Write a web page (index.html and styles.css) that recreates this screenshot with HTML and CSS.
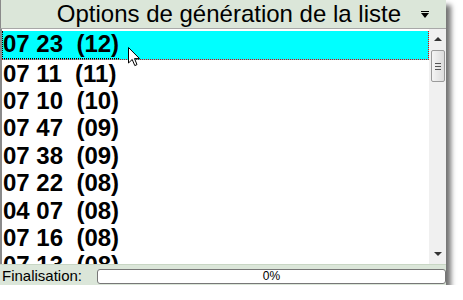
FILE: index.html
```html
<!DOCTYPE html>
<html lang="fr">
<head>
	<meta charset="UTF-8">
	<title>Liste</title>
	<link rel="stylesheet" href="styles.css">
</head>
<body>
<div class="win">
	<div class="head">
		<span class="head-title">Options de génération de la liste</span>
		<span class="head-arrow"></span>
	</div>
	<div class="body">
		<ul class="list">
			<li class="sel"><span class="focus">07 23  (12)</span></li>
			<li>07 11  (11)</li>
			<li>07 10  (10)</li>
			<li>07 47  (09)</li>
			<li>07 38  (09)</li>
			<li>07 22  (08)</li>
			<li>04 07  (08)</li>
			<li>07 16  (08)</li>
			<li>07 13  (08)</li>
		</ul>
		<div class="scroll">
			<span class="arr up"></span>
			<div class="track">
				<div class="thumb"><i></i><i></i><i></i></div>
			</div>
			<span class="arr down"></span>
		</div>
	</div>
	<div class="status">
		<span class="status-label">Finalisation:</span>
		<div class="progress">0%</div>
	</div>
	<svg class="cursor" width="13" height="21" viewBox="0 0 13 21">
		<path d="M0.5 0.5 L0.5 16 L4.2 12.5 L6.8 18.6 L9 17.6 L6.5 11.6 L11.5 11.6 Z" fill="#fff" stroke="#000" stroke-width="1"/>
	</svg>
</div>
</body>
</html>
```

FILE: styles.css
```css
body {
	margin: 0;
	background: #fff;
	font-family: "Liberation Sans", Arial, sans-serif;
}
.win {
	position: relative;
	width: 446px;
	height: 285px;
	display: flex;
	flex-direction: column;
	background: #fff;
	box-shadow: 5px 5px 5px rgba(0, 0, 0, 0.55);
}
.head {
	height: 28px;
	display: flex;
	align-items: center;
	justify-content: flex-end;
	background: #dbe6d9;
	border-left: 1px solid #8a8a8a;
	border-bottom: 1px solid #a8a8a8;
	padding-right: 17px;
}
.head-title {
	font-size: 24px;
	color: #000;
	margin-right: 20px;
}
.head-arrow {
	width: 0;
	height: 0;
	border-left: 4px solid transparent;
	border-right: 4px solid transparent;
	border-top: 5px solid #000;
	position: relative;
	top: 1px;
}
.head-arrow::before {
	content: "";
	position: absolute;
	left: -4px;
	top: -7px;
	width: 8px;
	height: 1px;
	background: #000;
}
.body {
	flex: 1;
	display: flex;
	min-height: 0;
	border-left: 2px solid #8a8a8a;
}
.list {
	flex: 1;
	margin: 0;
	padding: 2px 0 0 0;
	list-style: none;
	overflow: hidden;
}
.list > li {
	height: 27.4px;
	line-height: 27.4px;
	font-size: 24px;
	font-weight: bold;
	white-space: pre;
	padding-left: 1px;
	color: #000;
}
.list > li.sel {
	background: #00ffff;
	border-right: 1px dotted #e00;
	border-bottom: 1px dotted #e00;
	height: 27.6px;
	line-height: 26.4px;
	padding-left: 0;
}
.focus {
	display: inline-block;
	height: 27.6px;
	line-height: 26.4px;
	border-left: 1px dotted #000;
	border-bottom: 1px dotted #000;
	box-sizing: border-box;
}
.scroll {
	width: 17px;
	background: #f0f0f0;
	display: flex;
	flex-direction: column;
	align-items: center;
}
.arr {
	width: 0;
	height: 0;
	border-left: 4px solid transparent;
	border-right: 4px solid transparent;
	margin: 8px 0;
}
.arr.up {
	border-bottom: 4px solid #333;
}
.arr.down {
	border-top: 4px solid #333;
}
.track {
	flex: 1;
	width: 100%;
	display: flex;
	justify-content: center;
}
.thumb {
	width: 12px;
	height: 30px;
	margin-top: 1px;
	border: 1px solid #9a9a9a;
	border-radius: 2px;
	background: linear-gradient(to right, #f4f4f4, #dcdcdc);
	display: flex;
	flex-direction: column;
	justify-content: center;
	align-items: center;
	gap: 2px;
}
.thumb i {
	display: block;
	width: 6px;
	height: 1px;
	background: #555;
}
.status {
	height: 20px;
	display: flex;
	align-items: center;
	background: #dbe6d9;
	border-top: 1px solid #c8d6c4;
}
.status-label {
	font-size: 15px;
	color: #000;
	padding-left: 2px;
	width: 95px;
}
.progress {
	flex: 1;
	height: 13px;
	line-height: 13px;
	margin-top: 2px;
	background: #fff;
	border: 1px solid #777;
	border-radius: 3px;
	font-size: 12px;
	text-align: center;
	color: #000;
}
.cursor {
	position: absolute;
	left: 128px;
	top: 47px;
}
```
